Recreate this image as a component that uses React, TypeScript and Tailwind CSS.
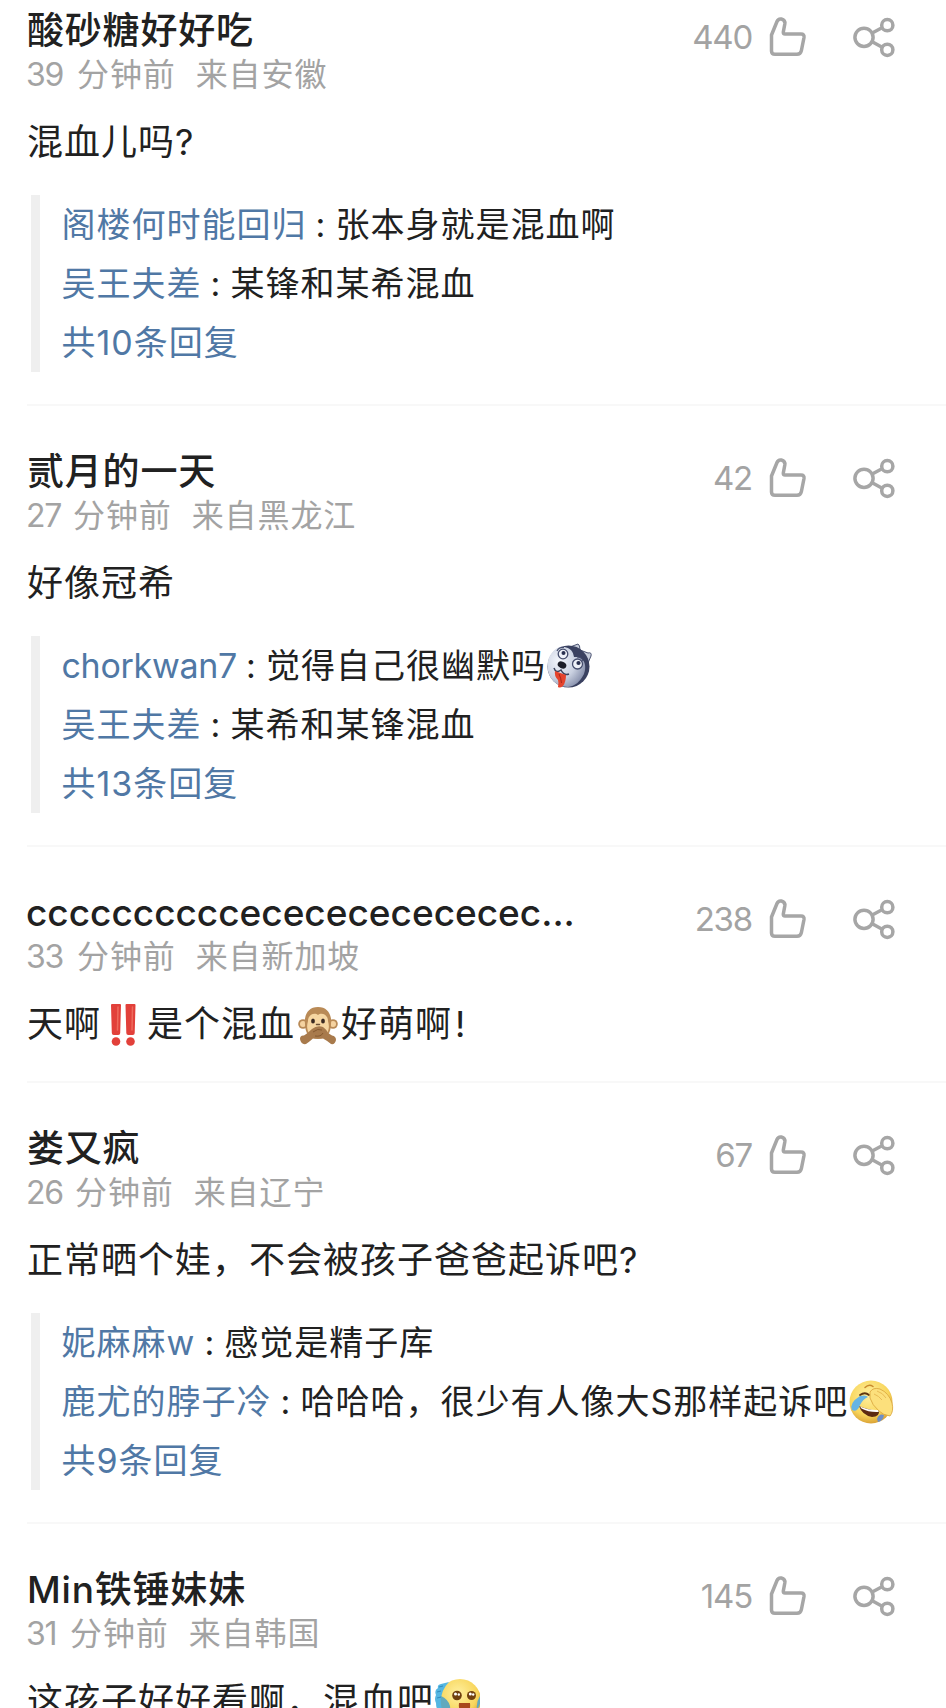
import type { ReactNode } from 'react'
import cx from 'clsx'

type Reply = {
  user: string
  text: ReactNode
}

type CommentData = {
  name: string
  age: string
  // width of the number before 分钟前, the digits are proportional
  ageWidth: string
  from: string
  likes: number
  body: ReactNode
  replies?: Reply[]
  replyCount?: number
}

const HuskyEmoji = () => (
  <svg viewBox="0 0 46 46" className="inline-block h-[46px] w-[46px] align-[-11px]">
    <defs>
      <radialGradient id="husky" cx="0.3" cy="0.35" r="0.75">
        <stop offset="0" stopColor="#f3f6fc" />
        <stop offset="0.6" stopColor="#c9d0e0" />
        <stop offset="1" stopColor="#8790ac" />
      </radialGradient>
    </defs>
    <path d="M24 4 L32 1 Q34 2 34 7 L42 10 Q46 9 45 13 L42 20 Z" fill="#c6ccda" stroke="#4b5371" strokeWidth="1" />
    <circle cx="22.500" cy="23.500" r="21" fill="#3a4160" />
    <path
      d="M16 3.500 C26 5 27 9 28 14 C39 13 41 23 38 31 C34 39 29 43 22 44 C10 44 2 35 1.500 24 C1 13 8 5 16 3.500 Z"
      fill="url(#husky)"
    />
    <circle cx="17" cy="11" r="4.800" fill="#eef1f8" stroke="#444c6c" strokeWidth="1.300" />
    <circle cx="17.500" cy="10" r="2" fill="#29304f" />
    <circle cx="31.500" cy="21" r="5" fill="#eef1f8" stroke="#444c6c" strokeWidth="1.300" />
    <circle cx="32.500" cy="20" r="2.100" fill="#29304f" />
    <path d="M11 8 Q13 4 18 4.500 M31 14 Q36 14 37 18" fill="none" stroke="#444c6c" strokeWidth="1.200" />
    <ellipse cx="16" cy="22" rx="4.500" ry="3.300" fill="#1b1d28" transform="rotate(25 16 22)" />
    <path d="M8 25 Q10 31 15 27 Q18 33 23 31" fill="none" stroke="#3d435c" strokeWidth="1.500" />
    <path d="M9 28 L20 32 Q20 39 17 43 Q14 45.500 12 44 Q13 40 12 37 Q8 33 9 28 Z" fill="#e5432c" />
    <path d="M13 31 Q15 35 15.500 40" fill="none" stroke="#a82619" strokeWidth="1" />
  </svg>
)

const BangBangEmoji = () => (
  <svg viewBox="0 0 46 46" className="inline-block h-[46px] w-[46px] align-[-11px]">
    <g fill="#e2403a">
      <path d="M11 2 h8 a1 1 0 0 1 1 1 l-.8 28 a2 2 0 0 1 -2 2 h-4.400 a2 2 0 0 1 -2 -2 l-.8 -28 a1 1 0 0 1 1 -1 Z" />
      <path d="M25.500 2 h8 a1 1 0 0 1 1 1 l-.8 28 a2 2 0 0 1 -2 2 h-4.400 a2 2 0 0 1 -2 -2 l-.8 -28 a1 1 0 0 1 1 -1 Z" />
      <circle cx="15" cy="39.500" r="4.300" />
      <circle cx="29.500" cy="39.500" r="4.300" />
    </g>
    <path d="M17 5 L16.500 28 M31.500 5 L31 28" stroke="#ee6a5c" strokeWidth="1.500" strokeLinecap="round" />
  </svg>
)

const MonkeyEmoji = () => (
  <svg viewBox="0 0 46 46" className="inline-block h-[46px] w-[46px] align-[-11px]">
    <circle cx="8" cy="22" r="4.800" fill="#b98a56" />
    <circle cx="38" cy="22" r="4.800" fill="#b98a56" />
    <circle cx="8" cy="22" r="3" fill="#f5d3a1" />
    <circle cx="38" cy="22" r="3" fill="#f5d3a1" />
    <path d="M23 5 C33 5 37 13 36 22 C36 32 31 37 23 37 C15 37 10 32 10 22 C9 13 13 5 23 5 Z" fill="#b98a56" />
    <path
      d="M23 13 C26 10 33 12 33 19 C36 29 31 35 23 35 C15 35 10 29 13 19 C13 12 20 10 23 13 Z"
      fill="#f6d6a2"
    />
    <ellipse cx="18" cy="19" rx="1.900" ry="2.500" fill="#3b2a22" />
    <ellipse cx="28" cy="19" rx="1.900" ry="2.500" fill="#3b2a22" />
    <path d="M21.500 22.500 h3" stroke="#6d5036" strokeWidth="1.500" strokeLinecap="round" />
    <path
      d="M5 37 Q5 33 9 33.500 Q13 31 17 27 Q22 23 28 25 Q31 27 33 31 L37 33.500 Q41 34 41 38 Q40 43 36 42 Q31 38 28 36.500 L18 36.500 Q14 40 11 42 Q6 43 5 37 Z"
      fill="#a87a4c"
    />
    <path d="M18 30 Q23 26 27 28 M20 34 Q26 35 28 31" fill="none" stroke="#85592f" strokeWidth="1" />
  </svg>
)

const FacepalmEmoji = () => (
  <svg viewBox="0 0 46 46" className="inline-block h-[46px] w-[46px] align-[-11px]">
    <defs>
      <radialGradient id="laugh" cx="0.45" cy="0.35" r="0.65">
        <stop offset="0" stopColor="#fff0a0" />
        <stop offset="0.7" stopColor="#f8d65c" />
        <stop offset="1" stopColor="#dba336" />
      </radialGradient>
    </defs>
    <circle cx="23" cy="23" r="21.500" fill="url(#laugh)" />
    <path d="M12 16 Q17 12.500 21 16" fill="none" stroke="#5e3610" strokeWidth="1.800" strokeLinecap="round" />
    <path d="M17 8.500 Q21 4.500 25 7.500" fill="none" stroke="#c98a2c" strokeWidth="1.500" strokeLinecap="round" />
    <path d="M11 27 Q22 32 31 31 Q32 38 24 38 Q14 36 11 27 Z" fill="#5c2a12" />
    <path d="M12 27.500 Q21 31.500 31 31 L30.500 33 Q21 33.500 13.500 29.500 Z" fill="#fff" />
    <path d="M12 17 Q18 15.500 20 18 Q15 20 12 26 Q9 34 4 31 Q1 24 12 17 Z" fill="#66b4e4" />
    <path d="M29 40 Q31 34 36 36 Q35 42 30 43 Z" fill="#6d8fc8" />
    <path
      d="M22 13 Q25 8 32 10 Q41 14 44 24 Q46 32 42 37 Q35 36 31 32 Q24 26 22 19 Z"
      fill="#fce07c"
      stroke="#dba840"
      strokeWidth="0.9"
    />
    <path d="M26 15 Q31 17 34 21 M29 12 Q35 14 38 19" fill="none" stroke="#e5b750" strokeWidth="0.9" />
  </svg>
)

const TearyEmoji = () => (
  <svg viewBox="0 0 46 46" className="inline-block h-[46px] w-[46px] align-[-10px]">
    <circle cx="26" cy="22" r="21" fill="url(#laugh)" />
    <path d="M15 4 L7 6 Q3 7 4 10 Q0 12 2 17 Q0 21 2 25 Q2 33 8 37 Q9 30 7 23 Q7 12 15 4 Z" fill="#54b6e2" />
    <path d="M7 18 Q14 21 16 28 Q17 36 11 38 Q6 31 7 18 Z" fill="#62a9bd" />
    <path d="M46 18 Q42 24 43 31 Q47 27 46.500 20 Z" fill="#62a9bd" />
    <path d="M5 9 L9 8 M3 14 L7 13 M3 20 L7 19" stroke="#2e86b8" strokeWidth="0.9" />
    <circle cx="23" cy="17.500" r="4.800" fill="#70400f" />
    <circle cx="37.500" cy="17.500" r="4.500" fill="#70400f" />
    <circle cx="21.500" cy="16" r="1.500" fill="#fff" />
    <circle cx="24.800" cy="16.500" r="1.200" fill="#fff" />
    <circle cx="36.300" cy="16" r="1.500" fill="#fff" />
    <circle cx="39.200" cy="16.500" r="1.200" fill="#fff" />
    <path d="M25 25 H36 Q37 35 30.500 35 Q24 35 25 25 Z" fill="#a8481c" />
  </svg>
)

const LikeIcon = () => (
  <svg viewBox="0 0 40 44" className="h-11 w-10" fill="none" stroke="#a6a6a6" strokeWidth="3.500" strokeLinejoin="round">
    <path d="M3.500 20 L9 6.500 C9.900 4.400 11.500 3.600 13.400 4 C16 4.600 17.200 6.400 16.800 9 L15.300 17 Q15 19 17 19 H33 Q36.500 19 36 22.500 L33.400 35.500 Q32.600 39.300 29 39.300 H7 Q3.500 39.300 3.500 36 Z" />
  </svg>
)

const ShareIcon = () => (
  <svg viewBox="0 0 44 44" className="h-11 w-11" fill="none" stroke="#a6a6a6" strokeWidth="3.500">
    <circle cx="13" cy="22.300" r="9.100" />
    <circle cx="36.300" cy="10.200" r="5.600" />
    <circle cx="36.300" cy="34.800" r="5.600" />
    <path d="M21.200 18 L31 12.800 M21.200 26.800 L31.200 32.200" />
  </svg>
)

const comments: CommentData[] = [
  {
    name: '酸砂糖好好吃',
    age: '39',
    ageWidth: 'w-[50px]',
    from: '安徽',
    likes: 440,
    body: '混血儿吗?',
    replies: [
      { user: '阁楼何时能回归', text: '张本身就是混血啊' },
      { user: '吴王夫差', text: '某锋和某希混血' },
    ],
    replyCount: 10,
  },
  {
    name: '贰月的一天',
    age: '27',
    ageWidth: 'w-[46px]',
    from: '黑龙江',
    likes: 42,
    body: '好像冠希',
    replies: [
      {
        user: 'chorkwan7',
        text: (
          <>
            觉得自己很幽默吗
            <HuskyEmoji />
          </>
        ),
      },
      { user: '吴王夫差', text: '某希和某锋混血' },
    ],
    replyCount: 13,
  },
  {
    name: 'ccccccccccececececececec...',
    age: '33',
    ageWidth: 'w-[50px]',
    from: '新加坡',
    likes: 238,
    body: (
      <>
        天啊
        <BangBangEmoji />
        是个混血
        <MonkeyEmoji />
        好萌啊<span className="ml-[3px]">!</span>
      </>
    ),
  },
  {
    name: '娄又疯',
    age: '26',
    ageWidth: 'w-[48px]',
    from: '辽宁',
    likes: 67,
    body: '正常晒个娃，不会被孩子爸爸起诉吧?',
    replies: [
      { user: '妮麻麻w', text: '感觉是精子库' },
      {
        user: '鹿尤的脖子冷',
        text: (
          <>
            哈哈哈，很少有人像大S那样起诉吧
            <FacepalmEmoji />
          </>
        ),
      },
    ],
    replyCount: 9,
  },
  {
    name: 'Min铁锤妹妹',
    age: '31',
    ageWidth: 'w-[43px]',
    from: '韩国',
    likes: 145,
    body: (
      <>
        这孩子好好看啊，混血吧
        <TearyEmoji />
      </>
    ),
  },
]

const isLatin = (text: string) => /^[\w.]+$/.test(text)

const Comment = ({ comment }: { comment: CommentData }) => (
  <div className={cx('ml-[27px] border-b-2 border-[#f8f8f8] pt-[42px]', comment.replies ? 'pb-8' : 'pb-[31px]')}>
    <div className="flex justify-between">
      <div>
        <p
          className={cx(
            'h-[50px] text-[37px] leading-[48px] font-medium text-[#212121]',
            isLatin(comment.name) ? '-ml-px tracking-[0px]' : 'tracking-[0.8px]'
          )}
        >
          {comment.name}
        </p>
        <p className="flex h-9 text-[32px] leading-[35px] tracking-[0.9px] text-[#a3a3a3]">
          <span className={cx(comment.ageWidth, '-ml-px mr-px font-normal tracking-[-1.2px]')}>{comment.age}</span>
          <span>分钟前</span>
          <span className="ml-5">来自{comment.from}</span>
        </p>
      </div>
      <div className="mt-2 mr-[51px] flex h-11 items-center">
        <span className="mr-4 text-[33px] leading-none font-normal tracking-[-1.2px] text-[#a3a3a3]">
          {comment.likes}
        </span>
        <LikeIcon />
        <span className="ml-[43px]">
          <ShareIcon />
        </span>
      </div>
    </div>
    <p className="mt-6 h-[51px] text-[36px] leading-[51px] tracking-[1px] whitespace-nowrap text-[#212121]">
      {comment.body}
    </p>
    {comment.replies && (
      <div className="mt-[27px] ml-1 border-l-9 border-[#efefef] pl-[21.500px] text-[34px] leading-[59px] tracking-[1px] whitespace-nowrap text-[#212121]">
        {comment.replies.map((reply) => (
          <p key={reply.user} className="flex h-[59px]">
            <span className={cx('text-[#5078a5]', isLatin(reply.user) && 'tracking-[-0.3px]')}>{reply.user}</span>
            <span className="w-[29px] text-center">:</span>
            <span>{reply.text}</span>
          </p>
        ))}
        <p className="h-[59px] text-[#5078a5]">共{comment.replyCount}条回复</p>
      </div>
    )}
  </div>
)

const App = () => {
  return (
    <div className="h-[1708px] w-[946px] overflow-hidden bg-white font-['Inter','Noto_Sans_CJK_SC',sans-serif]">
      <div className="-mt-[35px]">
        {comments.map((comment) => (
          <Comment key={comment.name} comment={comment} />
        ))}
      </div>
    </div>
  )
}

export default App
